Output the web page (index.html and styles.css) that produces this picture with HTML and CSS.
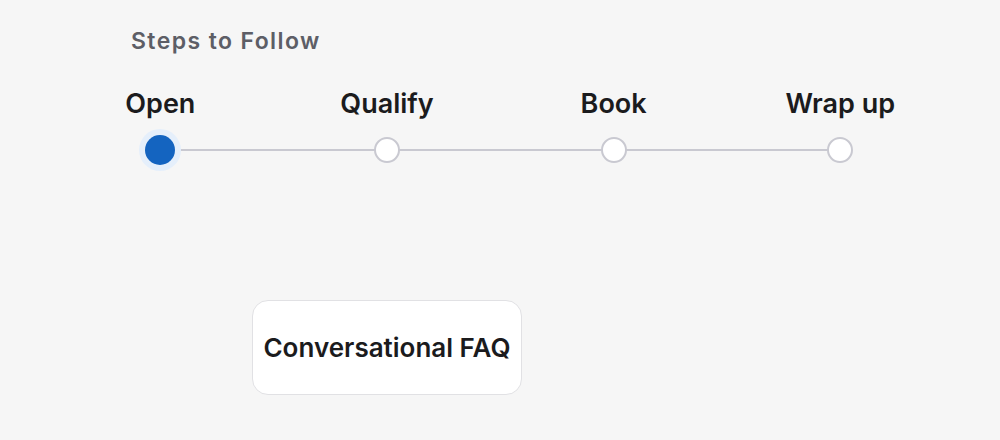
FILE: index.html
```html
<!DOCTYPE html>
<html>
<head>
<meta charset="utf-8">
<link rel="stylesheet" href="styles.css">
</head>
<body>
<div class="page">
  <h2 class="title">Steps to Follow</h2>
  <ol class="steps">
    <li class="step active"><span class="label">Open</span><span class="dot"></span></li>
    <li class="step"><span class="label">Qualify</span><span class="dot"></span></li>
    <li class="step"><span class="label">Book</span><span class="dot"></span></li>
    <li class="step"><span class="label">Wrap up</span><span class="dot"></span></li>
  </ol>
  <div class="cards">
    <div class="card">Conversational FAQ</div>
  </div>
</div>
</body>
</html>
```

FILE: styles.css
```css
* { box-sizing: border-box; }
html, body {
  margin: 0;
  padding: 0;
  background: #f6f6f6;
  font-family: Inter, "Noto Sans", sans-serif;
  width: 1000px;
  height: 440px;
  overflow: hidden;
}
.page {
  padding-top: 26px;
}
.title {
  margin: 0 0 0 131px;
  font-size: 23px;
  line-height: 30px;
  font-weight: 600;
  color: #5d5e66;
  letter-spacing: 1.4px;
}
.steps {
  list-style: none;
  margin: 32px 0 0 47px;
  padding: 0;
  display: grid;
  grid-template-columns: repeat(4, 226.67px);
}
.step {
  display: flex;
  flex-direction: column;
  align-items: center;
  position: relative;
}
.label {
  font-size: 27px;
  line-height: 32px;
  font-weight: 600;
  color: #1b1b1d;
  white-space: nowrap;
}
.dot {
  margin-top: 17px;
  width: 26px;
  height: 26px;
  border-radius: 50%;
  background: #ffffff;
  border: 2px solid #c9c9d1;
  position: relative;
  z-index: 1;
}
.step.active .dot {
  width: 30px;
  height: 30px;
  margin-top: 15px;
  border: none;
  background: #1464c0;
  box-shadow: 0 0 0 6px #e5effb;
}
.step + .step::before {
  content: "";
  position: absolute;
  top: 61px;
  right: 50%;
  width: 226.67px;
  height: 2px;
  background: #c9c9d1;
}
.cards {
  margin: 135px 0 0 252px;
}
.card {
  width: 270px;
  height: 95px;
  background: #ffffff;
  border: 1px solid #e1e1e4;
  border-radius: 16px;
  display: flex;
  align-items: center;
  justify-content: center;
  font-size: 26px;
  font-weight: 600;
  color: #1b1b1d;
  white-space: nowrap;
}
```
